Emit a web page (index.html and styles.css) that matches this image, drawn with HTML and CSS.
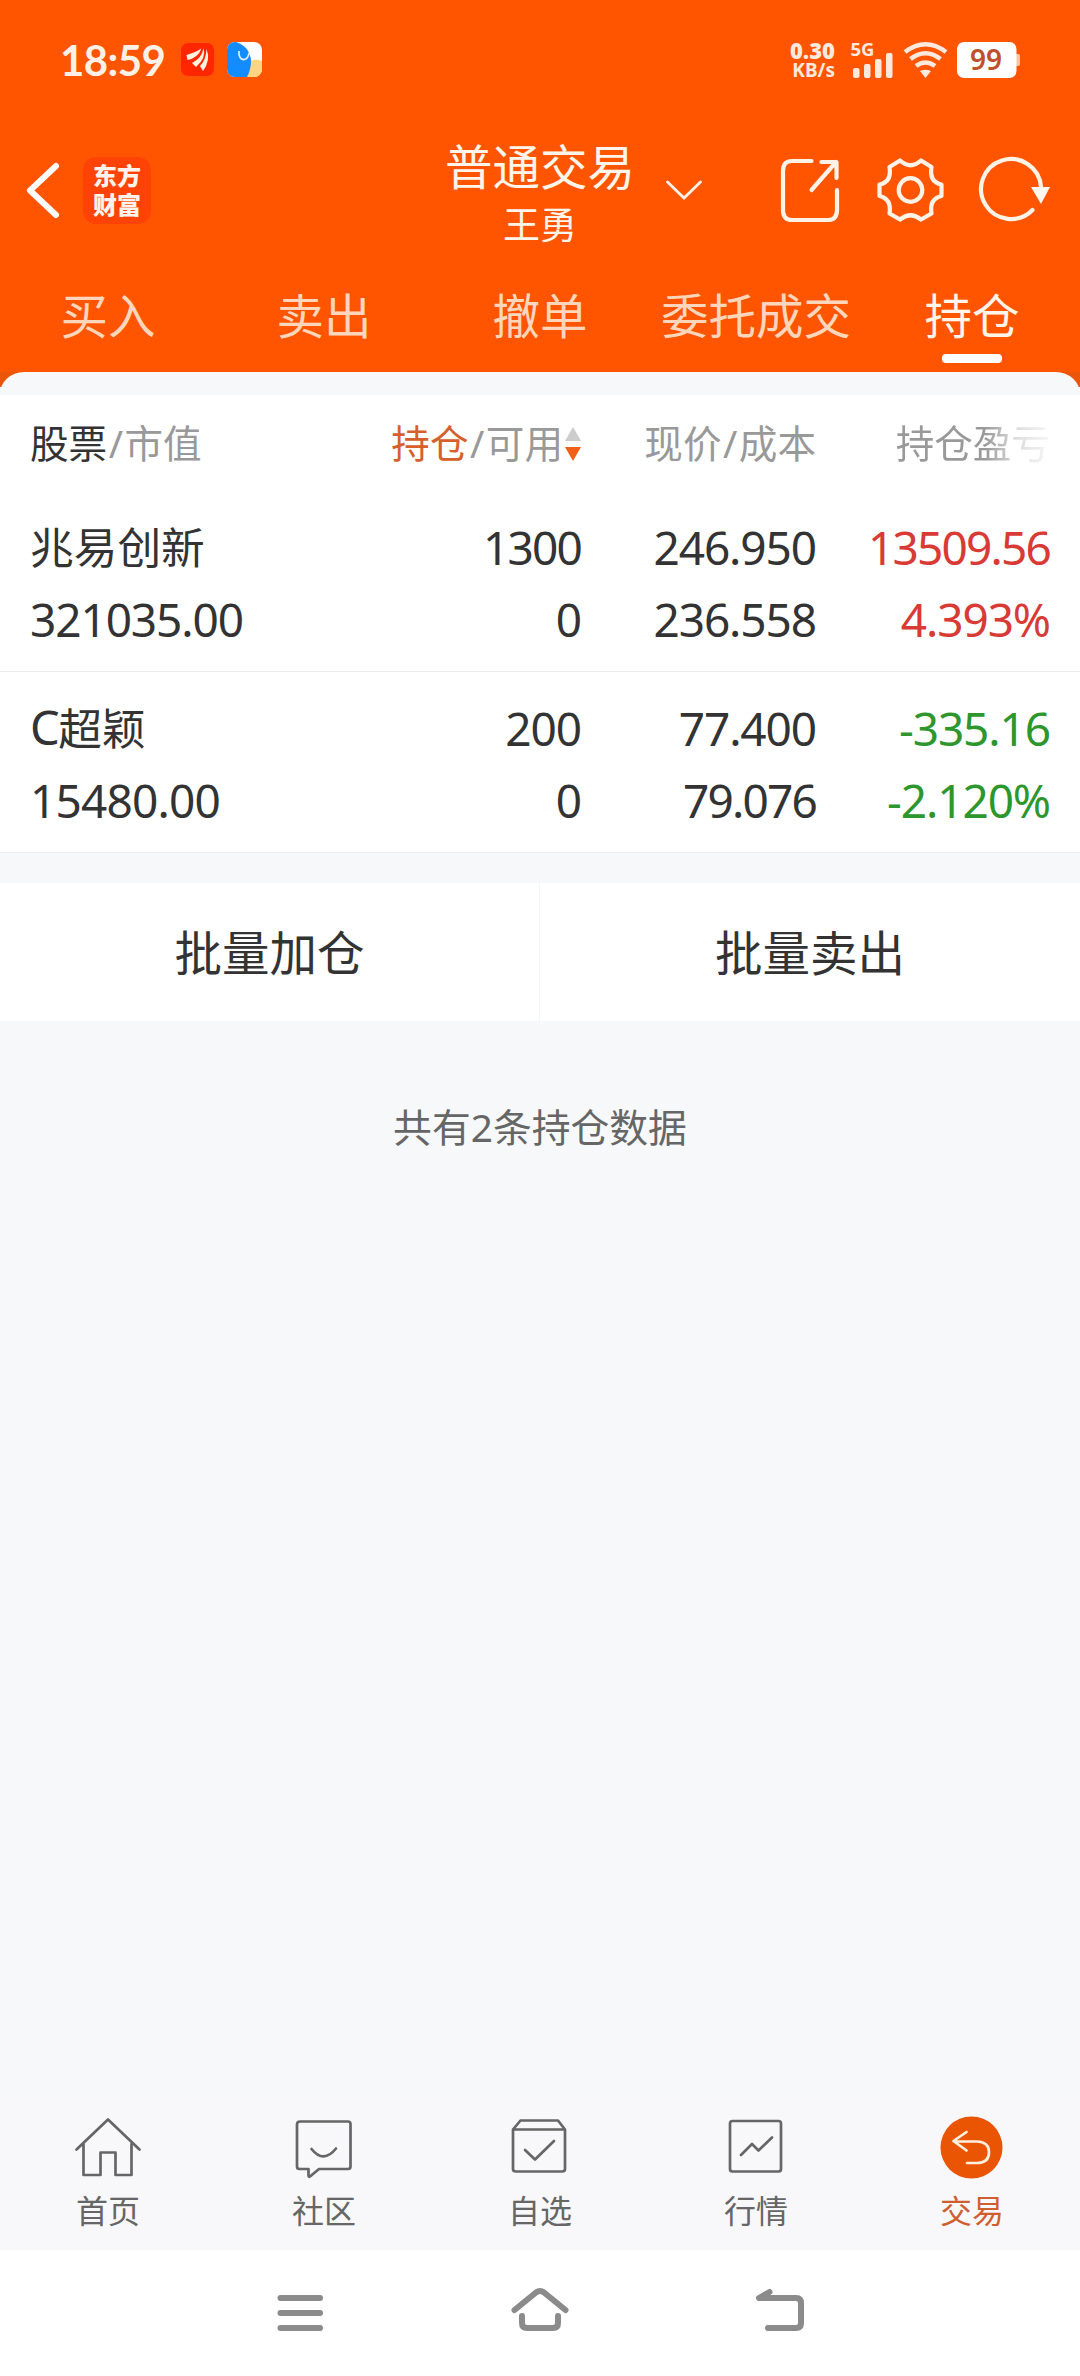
FILE: index.html
```html
<!DOCTYPE html>
<html lang="zh-CN">
<head>
<meta charset="utf-8">
<title>普通交易</title>
<link rel="stylesheet" href="styles.css">
</head>
<body>
<div class="app">
  <div class="top">
    <div class="status">
      <span class="time">18:59</span>
      <svg class="app-icons" viewBox="180 40 84 40" width="84" height="40">
        <rect x="181" y="43" width="33" height="33" rx="7" fill="#ff2600"/>
        <path d="M186.500 55Q196 52 201.500 48.500Q198 58 187.500 60Z M192 63Q202 58 203.500 48Q206.500 58 196 67Z M200 66Q206 60 206.500 49Q211 60 203 71Z" fill="#fff3e0"/>
        <clipPath id="pal"><rect x="227" y="42" width="35" height="35" rx="8"/></clipPath>
        <g clip-path="url(#pal)">
          <rect x="227" y="42" width="35" height="35" fill="#fff"/>
          <path d="M248 62Q255 58 262 61V77H245Z" fill="#ffd580"/>
          <path d="M227 42H236Q249 46 251 60Q251 70 247 77H227Z" fill="#128cff"/>
          <path d="M239 51C238 62 248 62 249 53" fill="none" stroke="#d8efff" stroke-width="1.800"/>
        </g>
      </svg>
      <div class="speed"><b>0.30</b><span>KB/s</span></div>
      <svg class="signals" viewBox="848 30 176 60" width="176" height="60">
        <text class="net" x="850.500" y="56">5G</text>
        <g fill="#ffe9df">
          <rect x="853" y="68" width="6.500" height="10" rx="2"/>
          <rect x="864" y="64" width="6.500" height="14" rx="2"/>
          <rect x="875" y="59" width="6.500" height="19" rx="2"/>
          <rect x="886" y="53" width="6.500" height="25" rx="2"/>
          <path d="M920 71Q925.500 68.500 931 71L925.500 78Z"/>
          <rect x="1014" y="54" width="6" height="12" rx="2" fill="#ffc4a4"/>
        </g>
        <g fill="none" stroke="#ffe9df" stroke-width="4.600">
          <path d="M905 52Q925.500 36.500 946 52"/>
          <path d="M910.500 59Q925.500 47.500 940.500 59"/>
          <path d="M916 66Q925.500 59 935 66"/>
        </g>
        <rect x="957" y="42" width="59.500" height="36" rx="7" fill="#fff"/>
        <text class="pct" x="986" y="70">99</text>
      </svg>
    </div>

    <div class="titlebar">
      <svg class="back" viewBox="24 158 40 64" width="40" height="64"><path d="M56 166L30 190.500L56 215" fill="none" stroke="#fff" stroke-width="6" stroke-linecap="round" stroke-linejoin="round"/></svg>
      <div class="brand">东方<br>财富</div>
      <div class="account"><h1>普通交易</h1><p>王勇</p></div>
      <svg class="chevron" viewBox="664 176 40 28" width="40" height="28"><path d="M667.500 182L684 198L700.500 182" fill="none" stroke="#fff1e6" stroke-width="2.800" stroke-linecap="round"/></svg>
      <svg class="actions" viewBox="776 152 280 76" width="280" height="76">
        <g fill="none" stroke="#fff3e8" stroke-width="4.200" stroke-linecap="round" stroke-linejoin="round">
          <path d="M811.500 161H792Q783 161 783 171V210Q783 220 792 220H828Q837 220 837 210V190"/>
          <path d="M821.500 162H836.500V178M836 162L811.500 190"/>
          <path d="M900 160.500Q910.500 170 921 160.500L931.500 167Q929 182 941.500 184.500V196Q929 199 931.500 213.500L921 219.500Q910.500 211 900 219.500L889.500 213.500Q892 199 879.500 196V184.500Q892 182 889.500 167Z"/>
          <circle cx="910.500" cy="190" r="11.800"/>
          <path d="M1032.500 210A30 30 0 1 1 1041 187"/>
        </g>
        <path d="M1031 187H1050L1041 204Z" fill="#fff8f0"/>
      </svg>
    </div>

    <nav class="tabs">
      <span>买入</span><span>卖出</span><span>撤单</span><span>委托成交</span><span class="on">持仓</span>
    </nav>
  </div>

  <div class="sheet-edge"><div class="sheet-top"></div></div>

  <section class="holdings">
    <div class="row head">
      <div><span class="dark">股票</span><i>/</i>市值</div>
      <div class="sort"><span class="hot">持仓</span><i>/</i>可用<svg viewBox="0 0 16 34" width="16" height="34"><path d="M8 0L16 14H0Z" fill="#ccc"/><path d="M0 20H16L8 34Z" fill="#f06018"/></svg></div>
      <div>现价<i>/</i>成本</div>
      <div><span class="fade">持仓盈亏</span></div>
    </div>
    <div class="row">
      <div><p class="name">兆易创新</p><p>321035.00</p></div>
      <div><p class="tight">1300</p><p>0</p></div>
      <div><p>246.950</p><p>236.558</p></div>
      <div class="up"><p class="tight">13509.56</p><p>4.393%</p></div>
    </div>
    <div class="row">
      <div><p class="name"><span class="latin">C</span>超颖</p><p class="loose">15480.00</p></div>
      <div><p>200</p><p>0</p></div>
      <div><p>77.400</p><p class="tight">79.076</p></div>
      <div class="down"><p>-335.16</p><p>-2.120%</p></div>
    </div>
  </section>

  <div class="batch"><span>批量加仓</span><span>批量卖出</span></div>
  <main class="summary">共有2条持仓数据</main>

  <nav class="bottom">
    <div class="item">
      <svg viewBox="74 2114 68 68" width="68" height="68"><path d="M76.500 2149.500L108 2119.500L139.500 2149.500M83.500 2144V2175H100.500V2152.500H115.500V2175H131.500V2144"/></svg>
      <span>首页</span>
    </div>
    <div class="item">
      <svg viewBox="290 2114 68 68" width="68" height="68"><path d="M300 2121.500H348Q350.500 2121.500 350.500 2124V2166.500Q350.500 2169 348 2169H319L310 2176.500Q308.500 2177.500 308.500 2175V2169H299.500Q297 2169 297 2166.500V2124.500Q297 2121.500 300 2121.500ZM311.500 2149Q323.500 2164 336 2148.500"/></svg>
      <span>社区</span>
    </div>
    <div class="item">
      <svg viewBox="506 2114 68 68" width="68" height="68"><path d="M513 2129.500H565V2169Q565 2171.500 562 2171.500H516Q513 2171.500 513 2169ZL520.500 2120.500H558L565 2129.500M525 2150L535 2159.500L554 2141"/></svg>
      <span>自选</span>
    </div>
    <div class="item">
      <svg viewBox="722 2114 68 68" width="68" height="68"><rect x="730" y="2121" width="51" height="50.500" rx="2.500"/><path d="M741 2155L752 2144L758.500 2150.500L772 2137.500"/></svg>
      <span>行情</span>
    </div>
    <div class="item on">
      <svg viewBox="938 2114 68 68" width="68" height="68"><circle cx="971.500" cy="2147.500" r="31" fill="#ea5504" stroke="none"/><path d="M966.500 2132L953.500 2141L966.500 2150.500M954 2141.500H977Q989 2142 989 2152Q989 2163 977 2163H967" stroke="#fff0de"/></svg>
      <span>交易</span>
    </div>
  </nav>

  <div class="system">
    <svg viewBox="272 2284 56 52" width="56" height="52"><path d="M280.500 2298H320M280.500 2313H320M280.500 2328H320"/></svg>
    <svg viewBox="508 2284 64 52" width="64" height="52"><path d="M514.500 2310L536 2292.500Q540 2289.500 544 2292.500L565.500 2310M522 2316V2323Q522 2328 527 2328H553Q558 2328 558 2323V2316"/></svg>
    <svg viewBox="752 2284 56 52" width="56" height="52"><path d="M769.500 2292L759 2298H796Q801 2298 801 2303V2323Q801 2328 796 2328H768"/></svg>
  </div>
</div>
</body>
</html>
```

FILE: styles.css
```css
* { box-sizing: border-box; }
body, h1, p { margin: 0; }
body {
  font-family: "Noto Sans", "Noto Sans CJK SC", sans-serif;
  color: #333;
  background: #f7f8fa;
}
svg { display: block; flex: none; }
.app { width: 1080px; height: 2376px; display: flex; flex-direction: column; overflow: hidden; }

.top { height: 372px; background: #ff5500; color: #fff; display: flex; flex-direction: column; flex: none; }

.status { height: 120px; padding-left: 60px; display: flex; align-items: center; }
.time { width: 120px; font: 700 42px/40px "Lato", sans-serif; letter-spacing: -0.6px; color: #fff0e8; }
.speed { width: 55px; margin-left: 516px; text-align: right; color: #ffe9df; display: flex; flex-direction: column; line-height: 20px; font-weight: 700; }
.speed b { font-size: 22px; }
.speed span { font-size: 19px; }
.signals { margin-left: 13px; }
.net { font: 700 18.500px "Noto Sans", sans-serif; fill: #ffe9df; }
.pct { font: 600 28px "Noto Sans", sans-serif; fill: #c0502a; text-anchor: middle; }

.titlebar { height: 140px; padding: 0 24px; display: flex; align-items: center; }
.brand {
  width: 68px; height: 67px; margin-left: 19px; padding-top: 3px; border-radius: 13px;
  background: #ff4306; color: #fff3ec; text-align: center;
  font: 900 24px/29px "Noto Sans CJK SC", sans-serif;
}
.account { width: 220px; margin-left: 279px; padding-top: 5px; text-align: center; color: #fff5ea; }
.account h1 { font: 400 47.500px/60px "Noto Sans CJK SC", sans-serif; }
.account p { font: 400 37px/56px "Noto Sans CJK SC", sans-serif; }
.chevron { margin-left: 14px; }
.actions { margin-left: 72px; }

.tabs { height: 112px; display: grid; grid-template-columns: repeat(5, 216px); text-align: center; font-size: 47.500px; line-height: 112px; color: #ffd5bb; }
.tabs .on { color: #fff5ea; display: flex; flex-direction: column; align-items: center; }
.tabs .on::after { content: ""; width: 60px; height: 9px; border-radius: 4px; margin-top: -18px; background: #fff; }

.sheet-edge { height: 23px; flex: none; background: linear-gradient(#ea5508 15px, #f7f8fa 15px); }
.sheet-top { height: 23px; background: #f7f8fa; border-radius: 24px 24px 0 0 / 22px 22px 0 0; }

.holdings { background: #fff; flex: none; }
.row {
  height: 181px; padding: 20px 30px 0 30px; display: grid;
  grid-template-columns: 200px 351px 235px 234px; text-align: right;
  border-bottom: 1px solid #ebebeb; font-size: 46px; line-height: 72px; letter-spacing: -1.1px;
}
.row > div:first-child { text-align: left; white-space: nowrap; }
.row .name { font-size: 43.700px; letter-spacing: 0; }
.latin { font-size: 47px; line-height: 1; letter-spacing: -1.500px; }
.row .tight { letter-spacing: -1.8px; }
.row .loose { letter-spacing: -0.8px; }
.row.head { height: 96px; padding-top: 0; border: 0; font-size: 38.600px; line-height: 97px; letter-spacing: 0; color: #999; }
.head i { font-style: normal; padding: 0 1.500px; }
.dark { color: #333; }
.hot { color: #d5602c; }
.sort { display: flex; justify-content: flex-end; align-items: center; }
.sort svg { margin-left: 2px; }
.fade { background: linear-gradient(90deg, #999 0 58%, #ddd 78%, #f6f6f6 100%); background-clip: text; -webkit-background-clip: text; color: transparent; }
.up { color: #d83a36; }
.down { color: #2d962d; }

.batch { height: 138px; margin-top: 30px; flex: none; display: grid; grid-template-columns: 540px 540px; background: #fff; text-align: center; font-size: 47.500px; line-height: 139px; }
.batch span:first-child { border-right: 1px solid #f4f5f7; }
.summary { flex: 1; padding-top: 77px; text-align: center; font-size: 38.800px; line-height: 58px; color: #666; }

.bottom { height: 156px; flex: none; padding-top: 20px; background: #f8f8fb; display: grid; grid-template-columns: repeat(5, 216px); }
.item { display: flex; flex-direction: column; align-items: center; color: #666; font-size: 32px; line-height: 44px; }
.item svg { margin-bottom: 7px; fill: none; stroke: #666; stroke-width: 2.700px; stroke-linecap: round; stroke-linejoin: round; }
.item.on { color: #d05f2f; }

.system { height: 126px; flex: none; padding-left: 272px; background: #fff; display: flex; align-items: center; gap: 180px; }
.system svg { fill: none; stroke: #8b8b8b; stroke-width: 6px; stroke-linecap: round; stroke-linejoin: round; margin-bottom: 6px; }
```
